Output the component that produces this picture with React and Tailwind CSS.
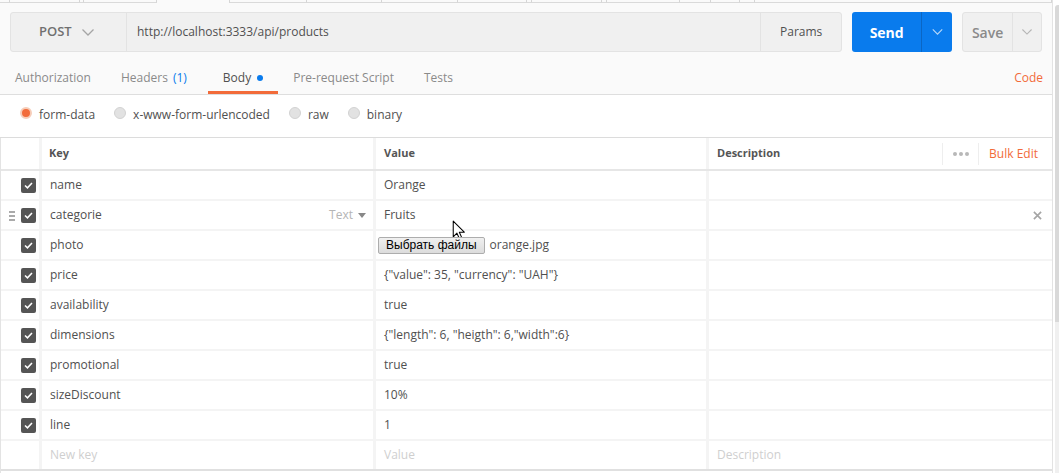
import React from "react";

const ticks = [10, 80, 84, 157, 230, 307, 382, 458, 527, 532, 602, 607, 680, 711, 740, 755, 1052];

const rows = [
  { key: "name", value: "Orange" },
  { key: "categorie", value: "Fruits", hover: true },
  { key: "photo", file: "orange.jpg" },
  { key: "price", value: '{"value": 35, "currency": "UAH"}' },
  { key: "availability", value: "true" },
  { key: "dimensions", value: '{"length": 6, "heigth": 6,"width":6}' },
  { key: "promotional", value: "true" },
  { key: "sizeDiscount", value: "10%" },
  { key: "line", value: "1" },
];

function Chevron({ className }) {
  return (
    <svg viewBox="0 0 12 7" className={className} fill="none" stroke="currentColor" strokeWidth="1.3">
      <path d="M0.5 0.5 L6 6 L11.5 0.5" />
    </svg>
  );
}

function Check() {
  return (
    <div className="w-[15px] h-[15px] rounded-[2px] bg-[#555] flex items-center justify-center">
      <svg viewBox="0 0 10 8" className="w-[9px] h-[7px]" fill="none" stroke="#fff" strokeWidth="1.8">
        <path d="M1 4 L3.8 6.6 L9 1.2" />
      </svg>
    </div>
  );
}

function Radio({ checked, label }) {
  return (
    <div className="flex items-center gap-[7px] mr-[19px]">
      {checked ? (
        <div className="-mt-[3px] w-[12px] h-[12px] rounded-full bg-[#f26b3a] border-2 border-[#f6cdb9]" />
      ) : (
        <div className="-mt-[3px] w-[12px] h-[12px] rounded-full bg-[#e2e2e2] border border-[#d2d2d2]" />
      )}
      <span className="text-[12px] text-[#505050]">{label}</span>
    </div>
  );
}

function Row({ row }) {
  return (
    <div className="flex h-[30px] border-b-2 border-[#f4f4f4] relative">
      <div className="w-[38px] flex items-center justify-end pr-[3px] relative">
        {row.hover && (
          <div className="absolute left-[8px] top-[10px] flex flex-col gap-[2px]">
            <div className="w-[6px] h-[2px] bg-[#aaa]" />
            <div className="w-[6px] h-[2px] bg-[#aaa]" />
            <div className="w-[6px] h-[2px] bg-[#aaa]" />
          </div>
        )}
        <Check />
      </div>
      <div className="w-[334px] border-l-[3px] border-[#f4f4f4] pl-[8px] pr-[7px] flex items-center text-[12px] text-[#505050]">
        <span className="flex-1">{row.key}</span>
        {row.hover && (
          <span className="flex items-center gap-[5px] text-[#b5b5b5]">
            Text
            <span className="w-0 h-0 border-l-[4px] border-r-[4px] border-t-[5px] border-l-transparent border-r-transparent border-t-[#888]" />
          </span>
        )}
      </div>
      <div className="w-[333px] border-l-[3px] border-[#f4f4f4] pl-[8px] flex items-center text-[12px] text-[#505050]">
        {row.file ? (
          <div className="flex items-center -ml-[6px]">
            <button className="h-[17px] px-[7px] border border-[#adadad] rounded-[2px] bg-gradient-to-b from-[#f0f0f0] to-[#dcdcdc] text-[12px] text-black font-['Liberation_Sans',Arial,sans-serif] leading-none">
              Выбрать файлы
            </button>
            <span className="ml-[5px]">{row.file}</span>
          </div>
        ) : (
          row.value
        )}
      </div>
      <div className="flex-1 border-l-[3px] border-[#f4f4f4] pl-[8px] pr-[10px] flex items-center justify-end">
        {row.hover && (
          <svg viewBox="0 0 10 10" className="w-[9px] h-[9px]" stroke="#a5a5a5" strokeWidth="1.8">
            <path d="M1 1 L9 9 M9 1 L1 9" />
          </svg>
        )}
      </div>
      {row.hover && (
        <svg viewBox="0 0 12 19" className="absolute left-[451px] top-[19px] w-[13px] h-[20px]">
          <path d="M1 1 L1 16 L4.5 12.5 L7 18 L9.2 17 L6.8 11.6 L11.5 11.6 Z" fill="#fff" stroke="#000" strokeWidth="1" strokeLinejoin="round" />
        </svg>
      )}
    </div>
  );
}

export default function App() {
  return (
    <div className="w-[1059px] h-[473px] overflow-hidden bg-white flex font-['Open_Sans',sans-serif]">
      <div className="w-[1053px] flex flex-col border-r border-[#e3e3e3]">
        {/* strip of tab bottoms */}
        <div className="h-[3px] flex bg-[#fafafa]">
          {ticks.map((t, i) => {
            const prev = i === 0 ? 0 : ticks[i - 1];
            return (
              <div
                key={t}
                style={{ width: t - prev }}
                className={
                  "h-full border-r border-[#d6d6d6] " +
                  (prev === 157 ? "border-b-0" : "border-b border-b-[#dadada]")
                }
              />
            );
          })}
        </div>

        <div className="bg-[#fafafa]">
          {/* request bar */}
          <div className="flex items-center pt-[9px] px-[10px]">
            <div className="w-[833px] h-[40px] flex border border-[#e3e3e3] rounded-[3px] bg-[#f0f0f0]">
              <div className="w-[116px] flex items-center pl-[28px] gap-[10px] border-r border-[#e3e3e3]">
                <span className="text-[13px] font-semibold text-[#707070]">POST</span>
                <Chevron className="w-[12px] h-[7px] text-[#a5a5a5]" />
              </div>
              <div className="flex-1 flex items-center pl-[10px] text-[12px] text-[#505050]">
                http://localhost:3333/api/products
              </div>
              <div className="w-[81px] flex items-center justify-center border-l border-[#e3e3e3] text-[12px] text-[#505050]">
                Params
              </div>
            </div>
            <div className="ml-[10px] w-[100px] h-[40px] flex rounded-[3px] bg-[#097bed]">
              <div className="w-[69px] flex items-center justify-center text-[14px] font-bold text-white">
                Send
              </div>
              <div className="flex-1 flex items-center justify-center border-l border-[#0a66c4]">
                <Chevron className="w-[11px] h-[6px] text-[#b8d8f8]" />
              </div>
            </div>
            <div className="ml-[10px] w-[80px] h-[40px] flex rounded-[3px] border border-[#e3e3e3] bg-[#f0f0f0]">
              <div className="w-[49px] flex items-center justify-center text-[14px] font-semibold text-[#8a8a8a]">
                Save
              </div>
              <div className="flex-1 flex items-center justify-center border-l border-[#e3e3e3]">
                <Chevron className="w-[10px] h-[6px] text-[#b5b5b5]" />
              </div>
            </div>
          </div>

          {/* tabs */}
          <div className="h-[43px] flex items-end border-b border-[#dedede] pr-[9px]">
            {[
              { label: "Authorization", pad: "px-[15px]" },
              { label: "Headers", count: "(1)", pad: "pl-[15px] pr-[21px]" },
              { label: "Body", active: true, pad: "px-[15px]" },
              { label: "Pre-request Script", pad: "px-[15px]" },
              { label: "Tests", pad: "px-[15px]" },
            ].map((t) => (
              <div
                key={t.label}
                className={
                  "h-[29px] flex items-start pt-[4px] border-b-[3px] text-[12px] " +
                  t.pad +
                  " " +
                  (t.active ? "border-[#f26b3a] text-[#505050]" : "border-transparent text-[#8a8a8a]")
                }
              >
                <span>{t.label}</span>
                {t.count && <span className="ml-[5px] text-[#097bed]">{t.count}</span>}
                {t.active && <span className="ml-[6px] mt-[6px] w-[6px] h-[6px] rounded-full bg-[#097bed]" />}
              </div>
            ))}
            <div className="flex-1" />
            <div className="h-[29px] pt-[4px] text-[12px] text-[#f26b3a]">Code</div>
          </div>
        </div>

        {/* body type */}
        <div className="h-[43px] flex items-center pl-[20px] pb-[3px] border-b border-[#dcdcdc]">
          <Radio checked label="form-data" />
          <Radio label="x-www-form-urlencoded" />
          <Radio label="raw" />
          <Radio label="binary" />
        </div>

        {/* table */}
        <div className="flex-1 border-l border-[#e3e3e3]">
          <div className="flex h-[33px] border-b-2 border-[#e6e6e6] text-[11px] font-bold text-[#555]">
            <div className="w-[38px]" />
            <div className="w-[334px] border-l-[3px] border-[#f4f4f4] pl-[7px] flex items-center">Key</div>
            <div className="w-[333px] border-l-[3px] border-[#f4f4f4] pl-[8px] flex items-center">Value</div>
            <div className="flex-1 border-l-[3px] border-[#f4f4f4] pl-[8px] flex items-center">
              <span className="flex-1">Description</span>
              <div className="h-[22px] w-[37px] border-l border-r border-[#eeeeee] flex items-center justify-center gap-[2px]">
                <span className="w-[4px] h-[4px] rounded-full bg-[#b8b8b8]" />
                <span className="w-[4px] h-[4px] rounded-full bg-[#b8b8b8]" />
                <span className="w-[4px] h-[4px] rounded-full bg-[#b8b8b8]" />
              </div>
              <span className="pl-[10px] pr-[14px] text-[12px] font-normal text-[#f26b3a]">Bulk Edit</span>
            </div>
          </div>
          {rows.map((r) => (
            <Row key={r.key} row={r} />
          ))}
          <div className="flex h-[30px] border-b-2 border-[#e0e0e0] text-[12px] text-[#cfcfcf]">
            <div className="w-[38px]" />
            <div className="w-[334px] border-l-[3px] border-[#f4f4f4] pl-[8px] flex items-center">New key</div>
            <div className="w-[333px] border-l-[3px] border-[#f4f4f4] pl-[8px] flex items-center">Value</div>
            <div className="flex-1 border-l-[3px] border-[#f4f4f4] pl-[8px] flex items-center">Description</div>
          </div>
        </div>
      </div>

      {/* scrollbar */}
      <div className="flex-1 pt-[5px] bg-white flex flex-col">
        <div className="h-[317px] ml-[2px] rounded-tl-[3px] bg-[#d9d9d9]" />
        <div className="flex-1 ml-[2px] bg-[#f0f0f0]" />
      </div>
    </div>
  );
}
